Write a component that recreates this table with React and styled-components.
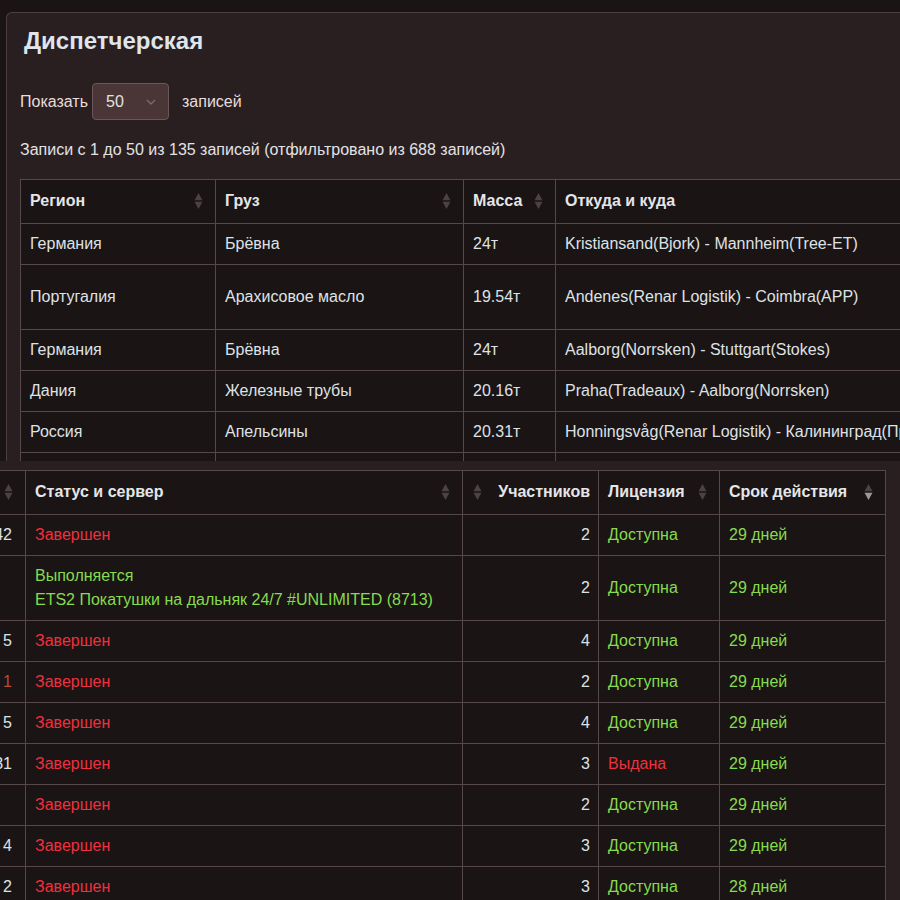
import React from 'react';
import styled, { createGlobalStyle } from 'styled-components';

const GlobalStyle = createGlobalStyle`
  html, body {
    margin: 0;
    background: #1a1415;
    overflow: hidden;
  }
  body {
    font-family: "Liberation Sans", Arial, sans-serif;
    font-size: 16px;
    color: #dfe2e4;
  }
`;

const Page = styled.div`
  width: 900px;
  height: 900px;
  display: flex;
  flex-direction: column;
`;

const TopShot = styled.section`
  height: 461px;
  overflow: hidden;
  padding: 12px 0 0 6px;
  box-sizing: border-box;
`;

const BottomShot = styled.section`
  height: 439px;
  overflow: hidden;
  background: #291f20;
  padding-top: 9px;
  box-sizing: border-box;
`;

const Panel = styled.div`
  background: #291f20;
  border: 1px solid #4d3f41;
  border-right: none;
  border-bottom: none;
  border-radius: 6px 0 0 0;
  padding: 13px 0 0 13px;
  min-height: 460px;
`;

const Title = styled.h2`
  margin: 0;
  padding-left: 4px;
  font-size: 24px;
  line-height: 30px;
  font-weight: 700;
  color: #dfe5ea;
`;

const LengthRow = styled.div`
  display: flex;
  align-items: center;
  margin-top: 27px;
  color: #e8dcdc;
  line-height: 20px;
`;

const Select = styled.div`
  width: 77px;
  height: 37px;
  box-sizing: border-box;
  margin: 0 13px 0 4px;
  padding: 0 12px 0 13px;
  display: flex;
  align-items: center;
  justify-content: space-between;
  background: #4a3637;
  border: 1px solid #6b5658;
  border-radius: 4px;
  color: #e2e2e4;
`;

const Info = styled.div`
  margin-top: 20px;
  line-height: 20px;
  color: #e2e2e6;
`;

const TableWrap = styled.div`
  margin-top: 19px;
`;

const Table = styled.table`
  border-collapse: collapse;
  table-layout: fixed;
  width: ${({ $width }) => $width}px;
  margin-left: ${({ $shift }) => $shift || 0}px;
  background: #1a1415;
`;

const Th = styled.th`
  border: 1px solid #55484a;
  padding: ${({ $right }) => ($right ? '9px 8px 10px 10px' : '9px 12px 10px 9px')};
  line-height: 24px;
  font-weight: 700;
  color: #e4e6e8;
  text-align: left;
  white-space: nowrap;
`;

const HeadInner = styled.div`
  display: flex;
  align-items: center;
  justify-content: space-between;
  gap: 6px;
`;

const Td = styled.td`
  border: 1px solid #55484a;
  padding: 8px 9px;
  line-height: 24px;
  height: ${({ $h }) => ($h ? `${$h}px` : 'auto')};
  box-sizing: border-box;
  text-align: ${({ $right }) => ($right ? 'right' : 'left')};
  padding-right: ${({ $right }) => ($right ? '8px' : '9px')};
  color: ${({ $tone }) =>
    $tone === 'red' ? '#f0303c' : $tone === 'green' ? '#86dc4e' : $tone === 'rust' ? '#b84a36' : '#dfe2e4'};
  white-space: nowrap;
  overflow: hidden;
`;

const IdCell = styled(Td)`
  padding-right: 13px;
`;

const Chevron = () => (
  <svg width="10" height="6" viewBox="0 0 10 6">
    <path d="M1 1l4 4 4-4" fill="none" stroke="#7d6b6c" strokeWidth="1.3" />
  </svg>
);

const SortIcon = ({ active }) => (
  <svg width="9" height="18" viewBox="0 0 9 18" style={{ flex: 'none' }}>
    <path d="M0.5 8.3L4.5 1l4 7.3z" fill="#4a4244" />
    <path d="M0.5 9.7L4.5 17l4-7.3z" fill={active ? '#9a9899' : '#4a4244'} />
  </svg>
);

const HeadCell = ({ children, right, sort = true, active }) => (
  <Th $right={right}>
    <HeadInner>
      {right && sort && <SortIcon />}
      <span>{children}</span>
      {!right && sort && <SortIcon active={active} />}
    </HeadInner>
  </Th>
);

const topRows = [
  { region: 'Германия', cargo: 'Брёвна', mass: '24т', route: 'Kristiansand(Bjork) - Mannheim(Tree-ET)' },
  { region: 'Португалия', cargo: 'Арахисовое масло', mass: '19.54т', route: 'Andenes(Renar Logistik) - Coimbra(APP)', h: 65 },
  { region: 'Германия', cargo: 'Брёвна', mass: '24т', route: 'Aalborg(Norrsken) - Stuttgart(Stokes)' },
  { region: 'Дания', cargo: 'Железные трубы', mass: '20.16т', route: 'Praha(Tradeaux) - Aalborg(Norrsken)' },
  { region: 'Россия', cargo: 'Апельсины', mass: '20.31т', route: 'Honningsvåg(Renar Logistik) - Калининград(Пром)' },
  { region: 'Италия', cargo: 'Мебель', mass: '18.2т', route: 'Milano(Tradeaux) - Genova(Fle)' },
];

const bottomRows = [
  { id: '6342', status: 'done', users: 2, lic: 'Доступна', term: '29 дней' },
  { id: '', status: 'run', server: 'ETS2 Покатушки на дальняк 24/7 #UNLIMITED (8713)', users: 2, lic: 'Доступна', term: '29 дней' },
  { id: '63 5', status: 'done', users: 4, lic: 'Доступна', term: '29 дней' },
  { id: '1', idTone: 'rust', status: 'done', users: 2, lic: 'Доступна', term: '29 дней' },
  { id: '63 5', status: 'done', users: 4, lic: 'Доступна', term: '29 дней' },
  { id: '6231', status: 'done', users: 3, lic: 'Выдана', term: '29 дней' },
  { id: '', status: 'done', users: 2, lic: 'Доступна', term: '29 дней' },
  { id: '62 4', status: 'done', users: 3, lic: 'Доступна', term: '29 дней' },
  { id: '61 2', status: 'done', users: 3, lic: 'Доступна', term: '28 дней' },
];

export default function App() {
  return (
    <>
      <GlobalStyle />
      <Page>
        <TopShot>
          <Panel>
            <Title>Диспетчерская</Title>
            <LengthRow>
              Показать
              <Select>
                50 <Chevron />
              </Select>
              записей
            </LengthRow>
            <Info>Записи с 1 до 50 из 135 записей (отфильтровано из 688 записей)</Info>
            <TableWrap>
              <Table $width={955}>
                <colgroup>
                  <col style={{ width: 195 }} />
                  <col style={{ width: 248 }} />
                  <col style={{ width: 92 }} />
                  <col style={{ width: 420 }} />
                </colgroup>
                <thead>
                  <tr>
                    <HeadCell>Регион</HeadCell>
                    <HeadCell>Груз</HeadCell>
                    <HeadCell>Масса</HeadCell>
                    <HeadCell sort={false}>Откуда и куда</HeadCell>
                  </tr>
                </thead>
                <tbody>
                  {topRows.map((r, i) => (
                    <tr key={i}>
                      <Td $h={r.h}>{r.region}</Td>
                      <Td $h={r.h}>{r.cargo}</Td>
                      <Td $h={r.h}>{r.mass}</Td>
                      <Td $h={r.h}>{r.route}</Td>
                    </tr>
                  ))}
                </tbody>
              </Table>
            </TableWrap>
          </Panel>
        </TopShot>
        <BottomShot>
          <Table $width={945} $shift={-60}>
            <colgroup>
              <col style={{ width: 85 }} />
              <col style={{ width: 437 }} />
              <col style={{ width: 136 }} />
              <col style={{ width: 121 }} />
              <col style={{ width: 166 }} />
            </colgroup>
            <thead>
              <tr>
                <HeadCell>№</HeadCell>
                <HeadCell>Статус и сервер</HeadCell>
                <HeadCell right>Участников</HeadCell>
                <HeadCell>Лицензия</HeadCell>
                <HeadCell active>Срок действия</HeadCell>
              </tr>
            </thead>
            <tbody>
              {bottomRows.map((r, i) => (
                <tr key={i}>
                  <IdCell $right $tone={r.idTone}>{r.id}</IdCell>
                  {r.status === 'run' ? (
                    <Td $tone="green">
                      Выполняется
                      <br />
                      {r.server}
                    </Td>
                  ) : (
                    <Td $tone="red">Завершен</Td>
                  )}
                  <Td $right>{r.users}</Td>
                  <Td $tone={r.lic === 'Выдана' ? 'red' : 'green'}>{r.lic}</Td>
                  <Td $tone="green">{r.term}</Td>
                </tr>
              ))}
            </tbody>
          </Table>
        </BottomShot>
      </Page>
    </>
  );
}
